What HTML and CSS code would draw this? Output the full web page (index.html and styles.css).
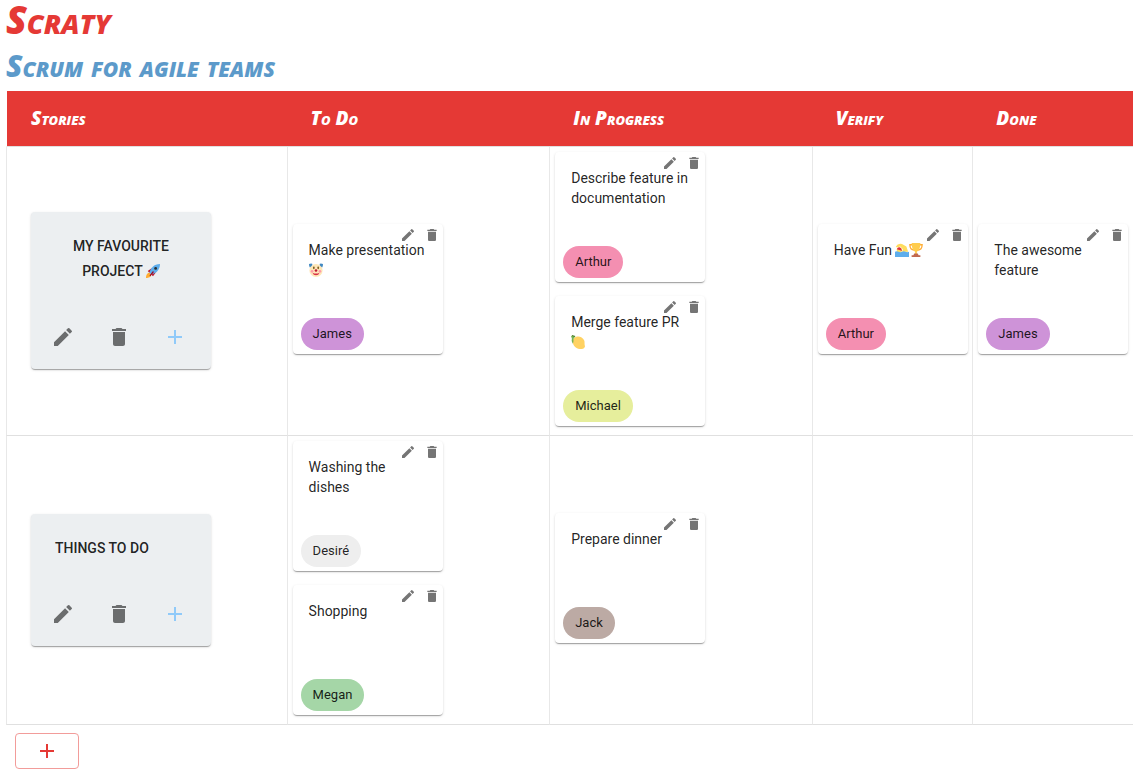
FILE: index.html
```html
<!DOCTYPE html>
<html lang="en">
<head>
<meta charset="utf-8">
<title>Scraty</title>
<link rel="stylesheet" href="styles.css">
</head>
<body>
<svg class="sprite" aria-hidden="true">
  <symbol id="pencil" viewBox="0 0 24 24"><path d="M3 17.25V21h3.75L17.81 9.94l-3.75-3.75L3 17.25zM20.71 7.04a1 1 0 0 0 0-1.41l-2.34-2.34a1 1 0 0 0-1.41 0l-1.83 1.83 3.75 3.75 1.83-1.83z"/></symbol>
  <symbol id="trash" viewBox="0 0 24 24"><path d="M6 19c0 1.1.9 2 2 2h8c1.100 0 2-.9 2-2V7H6v12zM19 4h-3.500l-1-1h-5l-1 1H5v2h14V4z"/></symbol>
  <symbol id="plus" viewBox="0 0 24 24"><path d="M19 13h-6v6h-2v-6H5v-2h6V5h2v6h6v2z"/></symbol>
</svg>
<header>
  <h1 class="brand">Scraty</h1>
  <h2 class="tagline">Scrum for agile teams</h2>
</header>
<main>
<table class="board">
  <colgroup><col class="col-story"><col class="col-wide"><col class="col-wide"><col class="col-slim"><col class="col-slim"></colgroup>
  <thead>
    <tr><th scope="col">Stories</th><th scope="col">To Do</th><th scope="col">In Progress</th><th scope="col">Verify</th><th scope="col">Done</th></tr>
  </thead>
  <tbody>
    <tr>
      <td class="story-cell">
        <article class="story">
          <h3 class="story-title">My favourite project <svg class="emoji" viewBox="0 0 16 16" role="img" aria-label="rocket"><path fill="#be1931" d="M2 8l4-3 3 1-5 4zM8 14l3-4-1-3-4 5z"/><path fill="#ffac33" d="M0 16c0-3 1-6 4-6l2 2c0 3-3 4-6 4z"/><path fill="#5dadec" d="M4 10c1-5 5-10 12-10 0 7-5 11-10 12z"/><path fill="#a0041e" d="M4 13L8 8l1 1-4 5z"/><circle cx="11" cy="5" r="1.600" fill="#292f33"/></svg></h3>
          <div class="story-actions">
            <button class="icon-button" aria-label="Edit story"><svg><use href="#pencil"/></svg></button>
            <button class="icon-button" aria-label="Delete story"><svg><use href="#trash"/></svg></button>
            <button class="icon-button add" aria-label="Add task"><svg><use href="#plus"/></svg></button>
          </div>
        </article>
      </td>
      <td>
        <div class="stack">
          <article class="task">
            <p class="task-text">Make presentation <svg class="emoji" viewBox="0 0 16 16" role="img" aria-label="clown"><circle cx="8" cy="8.500" r="7.500" fill="#fee7b8"/><path fill="#4289c1" d="M0 1q3-1 4 0 0 2-3 4-1-1-1-4zM16 1q-3-1-4 0 0 2 3 4 1-1 1-4z"/><ellipse cx="5.500" cy="5.500" rx="1" ry="1.500" fill="#7d5b1f"/><ellipse cx="10.500" cy="5.500" rx="1" ry="1.500" fill="#7d5b1f"/><circle cx="3.500" cy="9.500" r="1.500" fill="#ff9aa8"/><circle cx="12.500" cy="9.500" r="1.500" fill="#ff9aa8"/><circle cx="8" cy="8.500" r="1.500" fill="#be1931"/><path d="M4 11q4 2 8 0-1 3-4 3t-4-3z" fill="#da2f47"/></svg></p>
            <div class="task-actions"><button class="icon-button" aria-label="Edit task"><svg><use href="#pencil"/></svg></button><button class="icon-button" aria-label="Delete task"><svg><use href="#trash"/></svg></button></div>
            <span class="chip purple">James</span>
          </article>
        </div>
      </td>
      <td>
        <div class="stack">
          <article class="task">
            <p class="task-text">Describe feature in documentation</p>
            <div class="task-actions"><button class="icon-button" aria-label="Edit task"><svg><use href="#pencil"/></svg></button><button class="icon-button" aria-label="Delete task"><svg><use href="#trash"/></svg></button></div>
            <span class="chip pink">Arthur</span>
          </article>
          <article class="task">
            <p class="task-text">Merge feature PR <svg class="emoji" viewBox="0 0 16 16" role="img" aria-label="lemon"><path fill="#ffd262" d="M3 4c4-4 10-2 12 2 1 2 0 4 1 7-1 3-3 3-6 3C5 16 0 10 3 4z"/><path fill="#77b255" d="M0 1l5 0q-1 2-2 3 0 4-1 6-2-3-1-6z"/><path fill="#3e721d" d="M1 0l4 1-1 1-3-1z"/></svg></p>
            <div class="task-actions"><button class="icon-button" aria-label="Edit task"><svg><use href="#pencil"/></svg></button><button class="icon-button" aria-label="Delete task"><svg><use href="#trash"/></svg></button></div>
            <span class="chip lime">Michael</span>
          </article>
        </div>
      </td>
      <td>
        <div class="stack">
          <article class="task">
            <p class="task-text">Have Fun <svg class="emoji" viewBox="0 0 16 16" role="img" aria-label="swimmer"><path fill="#ffdc5d" d="M1 4q2-4 7-3l5 3 2 6H8l1-3-3-3-4 1z"/><circle cx="5" cy="8" r="3" fill="#ffdc5d"/><path fill="#dd2e44" d="M2 7q2-4 5-1l1 3-3-1z"/><path fill="#5dadec" d="M0 10q2-1 4 0t4 0 4 0 4 0v6H0z"/></svg><svg class="emoji" viewBox="0 0 16 16" role="img" aria-label="trophy"><path fill="none" stroke="#ffac33" stroke-width="1.500" d="M4 2H1q0 6 5 6M12 2h3q0 6-5 6"/><path fill="#ffcc4d" d="M3 0h10q0 8-4 10v3H7v-3Q3 8 3 0z"/><path fill="#c1694f" d="M6 12h4l1 2h2v2H3v-2h2z"/></svg></p>
            <div class="task-actions"><button class="icon-button" aria-label="Edit task"><svg><use href="#pencil"/></svg></button><button class="icon-button" aria-label="Delete task"><svg><use href="#trash"/></svg></button></div>
            <span class="chip pink">Arthur</span>
          </article>
        </div>
      </td>
      <td>
        <div class="stack">
          <article class="task">
            <p class="task-text">The awesome feature</p>
            <div class="task-actions"><button class="icon-button" aria-label="Edit task"><svg><use href="#pencil"/></svg></button><button class="icon-button" aria-label="Delete task"><svg><use href="#trash"/></svg></button></div>
            <span class="chip purple">James</span>
          </article>
        </div>
      </td>
    </tr>
    <tr>
      <td class="story-cell">
        <article class="story">
          <h3 class="story-title">Things to do</h3>
          <div class="story-actions">
            <button class="icon-button" aria-label="Edit story"><svg><use href="#pencil"/></svg></button>
            <button class="icon-button" aria-label="Delete story"><svg><use href="#trash"/></svg></button>
            <button class="icon-button add" aria-label="Add task"><svg><use href="#plus"/></svg></button>
          </div>
        </article>
      </td>
      <td>
        <div class="stack">
          <article class="task">
            <p class="task-text">Washing the dishes</p>
            <div class="task-actions"><button class="icon-button" aria-label="Edit task"><svg><use href="#pencil"/></svg></button><button class="icon-button" aria-label="Delete task"><svg><use href="#trash"/></svg></button></div>
            <span class="chip gray">Desiré</span>
          </article>
          <article class="task">
            <p class="task-text">Shopping</p>
            <div class="task-actions"><button class="icon-button" aria-label="Edit task"><svg><use href="#pencil"/></svg></button><button class="icon-button" aria-label="Delete task"><svg><use href="#trash"/></svg></button></div>
            <span class="chip green">Megan</span>
          </article>
        </div>
      </td>
      <td>
        <div class="stack">
          <article class="task">
            <p class="task-text">Prepare dinner</p>
            <div class="task-actions"><button class="icon-button" aria-label="Edit task"><svg><use href="#pencil"/></svg></button><button class="icon-button" aria-label="Delete task"><svg><use href="#trash"/></svg></button></div>
            <span class="chip brown">Jack</span>
          </article>
        </div>
      </td>
      <td></td>
      <td></td>
    </tr>
  </tbody>
</table>
<button class="add-story" aria-label="Add story"><svg><use href="#plus"/></svg></button>
</main>
</body>
</html>
```
FILE: styles.css
```css
* { box-sizing: border-box; }
body {
  margin: 0;
  padding: 0 6px;
  background: #fff;
  color: rgba(0, 0, 0, 0.87);
  font-family: Roboto, sans-serif;
  font-size: 14px;
}
.sprite { display: none; }
button { font: inherit; cursor: pointer; }
svg { display: block; fill: currentColor; }

.brand, .tagline, .board th {
  font-family: "Permanent Marker", "Open Sans", sans-serif;
  font-weight: 800;
  font-style: italic;
  font-variant: small-caps;
}
.brand {
  margin: 0;
  color: #e53935;
  font-size: 38px;
  line-height: 38px;
}
.tagline {
  margin: 0;
  padding: 12px 0 9px;
  color: #5c9aca;
  font-size: 30px;
  line-height: 32px;
}

.board {
  width: 100%;
  table-layout: fixed;
  border-spacing: 0;
}
.col-story { width: 24.9%; }
.col-wide { width: 23.3%; }
.col-slim { width: 14.25%; }
.board th {
  height: 56px;
  padding: 0 24px 2px;
  background: #e53935;
  border-bottom: 1px solid #e0e0e0;
  color: #fff;
  font-size: 19px;
  text-align: left;
}
.board th:first-child { border-left: 1px solid #fff; }
.board td {
  padding: 5px 5px 9px;
  border-left: 1px solid #e8e8e8;
  border-bottom: 1px solid #e0e0e0;
  vertical-align: middle;
}
.board .story-cell { padding: 5px 24px 6px; }

.story, .task {
  border-radius: 4px;
  box-shadow: 0 2px 1px -1px rgba(0, 0, 0, 0.2), 0 1px 1px rgba(0, 0, 0, 0.14), 0 1px 3px rgba(0, 0, 0, 0.12);
}
.story {
  display: flex;
  flex-direction: column;
  align-items: flex-start;
  gap: 41px;
  width: 180px;
  padding: 22px 20px 20px;
  background: #eceff1;
}
.story-title {
  margin: 0;
  padding: 0 4px;
  font-size: 14px;
  font-weight: 500;
  line-height: 25px;
  text-align: center;
  text-transform: uppercase;
}
.story-actions { display: flex; gap: 32px; }
.icon-button {
  padding: 0;
  border: 0;
  background: none;
  color: #757575;
}
.story .icon-button { color: #6b6d6e; }
.story .add { color: #90caf9; }
.story .icon-button svg { width: 24px; height: 24px; }

.stack { display: flex; flex-direction: column; gap: 14px; }
.task {
  position: relative;
  display: flex;
  flex-direction: column;
  justify-content: space-between;
  align-items: flex-start;
  width: 150px;
  min-height: 130px;
  padding: 16px 8px 4px;
  background: #fff;
}
.task-text { margin: 0; padding: 0 8px; line-height: 20px; }
.task-actions {
  position: absolute;
  top: 3px;
  right: 3px;
  display: flex;
  gap: 8px;
}
.task .icon-button svg { width: 16px; height: 16px; }
.emoji { display: inline-block; width: 14px; height: 14px; vertical-align: -2px; }

.chip {
  padding: 0 12px;
  border-radius: 16px;
  font-size: 13px;
  line-height: 32px;
}
.purple { background: #ce93d8; }
.pink { background: #f48fb1; }
.lime { background: #e6ee9c; }
.gray { background: #eeeeee; }
.green { background: #a5d6a7; }
.brown { background: #bcaaa4; }

.add-story {
  display: flex;
  align-items: center;
  justify-content: center;
  width: 64px;
  height: 36px;
  margin: 8px 9px;
  padding: 0;
  background: #fff;
  border: 1px solid #f29c9a;
  border-radius: 4px;
  color: #e53935;
}
.add-story svg { width: 24px; height: 24px; }
```
